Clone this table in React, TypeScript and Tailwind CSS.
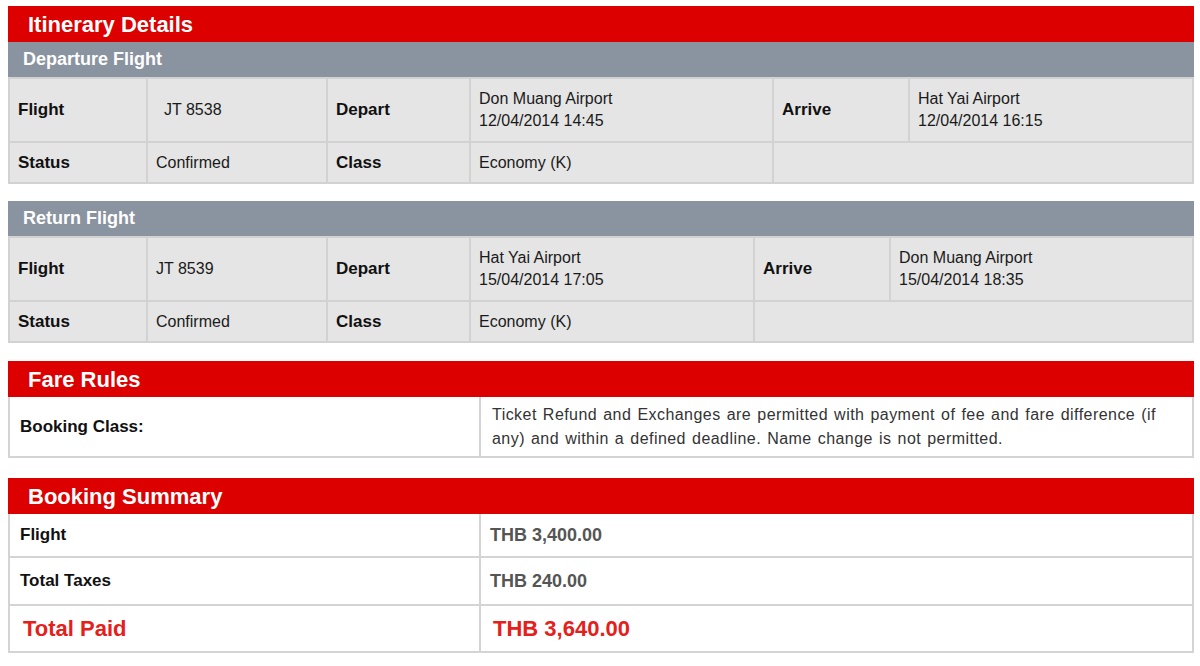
import React from 'react';

type Flight = {
  title: string;
  number: string;
  indent?: boolean;
  from: string;
  fromTime: string;
  to: string;
  toTime: string;
  col4: string;
};

const flights: Flight[] = [
  {
    title: 'Departure Flight',
    number: 'JT 8538',
    indent: true,
    from: 'Don Muang Airport',
    fromTime: '12/04/2014 14:45',
    to: 'Hat Yai Airport',
    toTime: '12/04/2014 16:15',
    col4: 'w-[301px]',
  },
  {
    title: 'Return Flight',
    number: 'JT 8539',
    from: 'Hat Yai Airport',
    fromTime: '15/04/2014 17:05',
    to: 'Don Muang Airport',
    toTime: '15/04/2014 18:35',
    col4: 'w-[282px]',
  },
];

const label = 'bg-[#e5e5e5] px-2 text-left align-middle text-[17px] font-bold text-[#111]';
const value = 'bg-[#e5e5e5] px-2 text-left align-middle text-[16px] leading-[22px] text-[#1a1a1a]';

function RedHeader({ children }: { children: React.ReactNode }) {
  return (
    <div className="flex h-[36px] items-center bg-[#dc0000] pl-5 text-[22px] font-bold text-white">
      {children}
    </div>
  );
}

function FlightTable({ f }: { f: Flight }) {
  return (
    <div>
      <div className="flex h-[35px] items-center bg-[#8a93a0] pl-[15px] text-[18px] font-bold text-white">
        {f.title}
      </div>
      <table className="w-full table-fixed border-separate border-spacing-[2px] bg-[#d2d2d2]">
        <colgroup>
          <col className="w-[136px]" />
          <col className="w-[178px]" />
          <col className="w-[141px]" />
          <col className={f.col4} />
          <col className="w-[134px]" />
          <col />
        </colgroup>
        <tbody>
          <tr className="h-[62px]">
            <td className={label}>Flight</td>
            <td className={value + (f.indent ? ' pl-4' : '')}>{f.number}</td>
            <td className={label}>Depart</td>
            <td className={value + ' align-top pt-[9px]'}>
              {f.from}
              <br />
              {f.fromTime}
            </td>
            <td className={label}>Arrive</td>
            <td className={value + ' align-top pt-[9px]'}>
              {f.to}
              <br />
              {f.toTime}
            </td>
          </tr>
          <tr className="h-[39px]">
            <td className={label}>Status</td>
            <td className={value}>Confirmed</td>
            <td className={label}>Class</td>
            <td className={value}>Economy (K)</td>
            <td colSpan={2} className="bg-[#e5e5e5]"></td>
          </tr>
        </tbody>
      </table>
    </div>
  );
}

export default function App() {
  return (
    <div className="min-h-[666px] bg-white px-2 pt-[6px] font-['Liberation_Sans',Arial,sans-serif]">
      <div className="w-[1186px]">
        <RedHeader>Itinerary Details</RedHeader>
        <FlightTable f={flights[0]} />
        <div className="h-[17px]" />
        <FlightTable f={flights[1]} />

        <div className="mt-[18px]">
          <RedHeader>Fare Rules</RedHeader>
          <div className="grid h-[61px] grid-cols-[469px_1fr] border-2 border-t-0 border-[#d4d4d4] bg-white">
            <div className="flex items-center pl-[10px] text-[17px] font-bold text-[#111]">Booking Class:</div>
            <div className="flex items-center border-l-2 border-[#d4d4d4] pl-[11px] pr-[10px] text-[16px] leading-[24px] tracking-[0.45px] text-[#333] [word-spacing:1.2px]">
              Ticket Refund and Exchanges are permitted with payment of fee and fare difference (if any) and within a defined deadline. Name change is not permitted.
            </div>
          </div>
        </div>

        <div className="mt-[20px]">
          <RedHeader>Booking Summary</RedHeader>
          <div className="border-x-2 border-[#d4d4d4] bg-white">
            <div className="grid h-[44px] grid-cols-[469px_1fr] border-b-2 border-[#d4d4d4]">
              <div className="flex items-center pl-[10px] text-[17px] font-bold text-[#111]">Flight</div>
              <div className="flex items-center border-l-2 border-[#d4d4d4] pl-[9px] text-[18px] font-bold text-[#555]">THB 3,400.00</div>
            </div>
            <div className="grid h-[48px] grid-cols-[469px_1fr] border-b-2 border-[#d4d4d4]">
              <div className="flex items-center pl-[10px] text-[17px] font-bold text-[#111]">Total Taxes</div>
              <div className="flex items-center border-l-2 border-[#d4d4d4] pl-[9px] text-[18px] font-bold text-[#555]">THB 240.00</div>
            </div>
            <div className="grid h-[47px] grid-cols-[469px_1fr] border-b-2 border-[#d4d4d4]">
              <div className="flex items-center pl-[13px] text-[22px] font-bold text-[#e4201b]">Total Paid</div>
              <div className="flex items-center border-l-2 border-[#d4d4d4] pl-[12px] text-[22px] font-bold text-[#e4201b]">THB 3,640.00</div>
            </div>
          </div>
        </div>
      </div>
    </div>
  );
}
